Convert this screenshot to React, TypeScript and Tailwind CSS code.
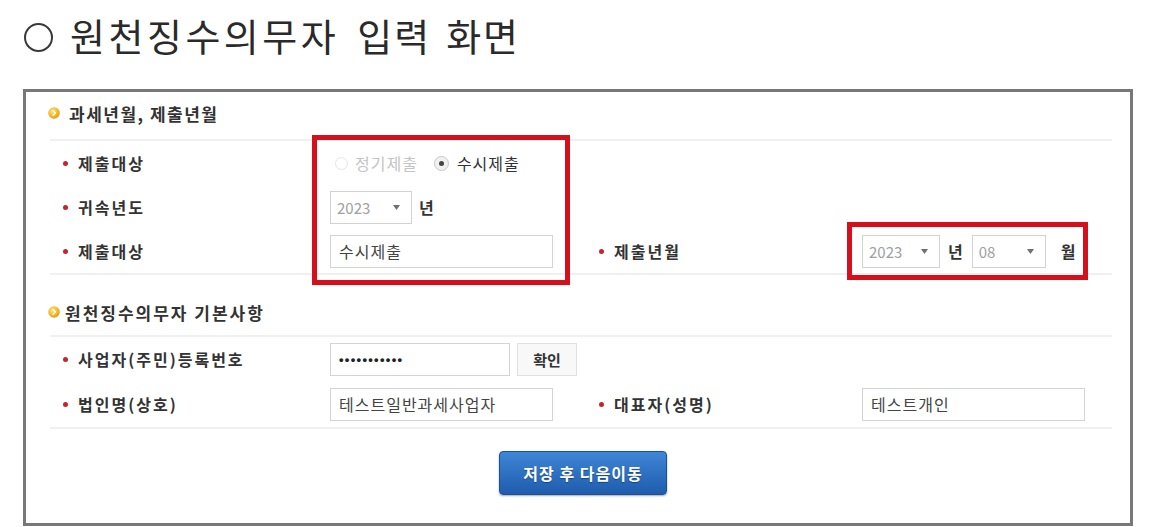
import React from "react";

const FONT = '"Noto Sans CJK KR", "Noto Sans", sans-serif';

function SectionIcon() {
  return (
    <svg width="12" height="12" viewBox="0 0 12 12" className="shrink-0">
      <defs>
        <radialGradient id="g1" cx="40%" cy="35%" r="70%">
          <stop offset="0%" stopColor="#fde58a" />
          <stop offset="60%" stopColor="#f2b928" />
          <stop offset="100%" stopColor="#d9980c" />
        </radialGradient>
      </defs>
      <circle cx="6" cy="6" r="5.8" fill="url(#g1)" />
      <path d="M5 3.6 L7.4 6 L5 8.4" stroke="#fff" strokeWidth="1.3" fill="none" strokeLinecap="round" strokeLinejoin="round" />
    </svg>
  );
}

function Label({ text }: { text: string }) {
  return (
    <div className="flex items-center">
      <span className="w-[5px] h-[5px] rounded-full bg-[#c8232c] shrink-0" />
      <span className="ml-[10px] text-[16px] font-bold tracking-[2px] text-[#333] leading-none whitespace-nowrap">
        {text}
      </span>
    </div>
  );
}

function Select({ value, w }: { value: string; w: string }) {
  return (
    <div className={`${w} h-[33px] border border-[#d2d2d2] bg-white flex items-center justify-between pl-[6px] pr-[11px]`}>
      <span className="text-[15px] text-[#a0a0a0] leading-none">{value}</span>
      <svg width="7" height="5" viewBox="0 0 7 5">
        <path d="M0 0 L7 0 L3.5 5 Z" fill="#707070" />
      </svg>
    </div>
  );
}

function Input({ value, w, dots }: { value: string; w: string; dots?: boolean }) {
  return (
    <div className={`${w} h-[33px] border border-[#d4d4d4] bg-white flex items-center pl-[8px]`}>
      {dots ? (
        <span className="text-[13px] font-bold text-[#222] tracking-[1.3px] leading-none" style={{ fontFamily: '"Liberation Sans", sans-serif' }}>
          •••••••••••
        </span>
      ) : (
        <span className="text-[16px] text-[#444] tracking-[1px] leading-none whitespace-nowrap">{value}</span>
      )}
    </div>
  );
}

function Unit({ t }: { t: string }) {
  return <span className="text-[16px] font-bold text-[#333] leading-none">{t}</span>;
}

function Sep() {
  return <div className="h-[2px] bg-[#f0f0f0] ml-[24px] mr-[18px]" />;
}

export default function App() {
  return (
    <div className="w-[1151px] h-[527px] bg-white overflow-hidden" style={{ fontFamily: FONT }}>
      <div className="h-[89px] pl-[24px] pt-[12px] flex items-start">
        <div className="flex items-center h-[46px]">
          <span className="w-[29px] h-[29px] rounded-full border-[2px] border-[#3a3a3a] shrink-0 mt-[4px]" />
          <span className="ml-[17px] text-[38px] leading-[46px] text-[#2a2a2a] tracking-[3.5px] font-normal whitespace-nowrap">원천징수의무자</span>
          <span className="ml-[18px] text-[38px] leading-[46px] text-[#2a2a2a] tracking-[2px] font-normal whitespace-nowrap">입력</span>
          <span className="ml-[15px] text-[38px] leading-[46px] text-[#2a2a2a] tracking-[2px] font-normal whitespace-nowrap">화면</span>
        </div>
      </div>

      <div className="relative ml-[23px] w-[1110px] h-[437px] border-[3px] border-[#787878]">
        {/* Section 1 header */}
        <div className="h-[47px] pb-[5px] flex items-center pl-[22px]">
          <SectionIcon />
          <span className="ml-[9px] text-[17px] font-bold tracking-[1.5px] text-[#333] leading-none">과세년월, 제출년월</span>
        </div>
        <Sep />

        <div className="grid grid-cols-[304px_267px_265px_1fr] h-[44px] items-center">
          <div className="pl-[37px]"><Label text="제출대상" /></div>
          <div className="flex items-center">
            <span className="ml-[5px] w-[13px] h-[13px] rounded-full border border-[#e6e6e6]" />
            <span className="ml-[7px] text-[16px] tracking-[1px] text-[#c4c4c4] leading-none">정기제출</span>
            <span className="ml-[16px] w-[15px] h-[15px] rounded-full border border-[#c8c8c8] bg-[#f1f1f1] flex items-center justify-center">
              <span className="w-[5px] h-[5px] rounded-full bg-[#444]" />
            </span>
            <span className="ml-[8px] text-[16px] tracking-[1px] text-[#333] leading-none">수시제출</span>
          </div>
          <div />
          <div />
        </div>

        <div className="grid grid-cols-[304px_267px_265px_1fr] h-[44px] items-center">
          <div className="pl-[37px]"><Label text="귀속년도" /></div>
          <div className="flex items-center">
            <Select value="2023" w="w-[82px]" />
            <span className="ml-[7px]"><Unit t="년" /></span>
          </div>
          <div />
          <div />
        </div>

        <div className="grid grid-cols-[304px_267px_265px_1fr] h-[44px] items-center">
          <div className="pl-[37px]"><Label text="제출대상" /></div>
          <div>
            <Input value="수시제출" w="w-[223px]" />
          </div>
          <div className="pl-[2px]"><Label text="제출년월" /></div>
          <div className="flex items-center">
            <Select value="2023" w="w-[78px]" />
            <span className="ml-[8px]"><Unit t="년" /></span>
            <span className="ml-[9px]"><Select value="08" w="w-[74px]" /></span>
            <span className="ml-[15px]"><Unit t="월" /></span>
          </div>
        </div>
        <Sep />

        {/* Section 2 header */}
        <div className="h-[60px] pt-[14px] flex items-center pl-[22px]">
          <SectionIcon />
          <span className="ml-[5px] text-[17px] font-bold tracking-[2px] text-[#333] leading-none">원천징수의무자 기본사항</span>
        </div>
        <Sep />

        <div className="grid grid-cols-[304px_267px_265px_1fr] h-[44px] items-center">
          <div className="pl-[37px]"><Label text="사업자(주민)등록번호" /></div>
          <div className="flex items-center">
            <Input value="" w="w-[180px]" dots />
            <div className="ml-[7px] w-[60px] h-[33px] border border-[#e0e0e0] bg-[#f8f8f8] flex items-center justify-center">
              <span className="text-[15px] font-bold text-[#333] leading-none">확인</span>
            </div>
          </div>
          <div />
          <div />
        </div>

        <div className="grid grid-cols-[304px_267px_265px_1fr] h-[46px] items-center">
          <div className="pl-[37px]"><Label text="법인명(상호)" /></div>
          <div>
            <Input value="테스트일반과세사업자" w="w-[223px]" />
          </div>
          <div className="pl-[2px]"><Label text="대표자(성명)" /></div>
          <div>
            <Input value="테스트개인" w="w-[223px]" />
          </div>
        </div>
        <Sep />

        <div className="flex justify-center mt-[22px]">
          <div className="ml-[10px] w-[168px] h-[44px] rounded-[4px] border border-[#1b4f97] bg-gradient-to-b from-[#3f86d6] to-[#1f5cad] shadow-[0_1px_2px_rgba(0,0,0,0.35)] flex items-center justify-center">
            <span className="text-[16px] font-bold tracking-[1px] text-white leading-none [text-shadow:0_1px_1px_rgba(0,0,0,0.35)]">
              저장 후 다음이동
            </span>
          </div>
        </div>

        {/* red highlight boxes */}
        <div className="absolute left-[286px] top-[43px] w-[258px] h-[150px] border-[5px] border-[#d5101a]" />
        <div className="absolute left-[821px] top-[130px] w-[241px] h-[58px] border-[5px] border-[#d5101a]" />
      </div>
    </div>
  );
}
